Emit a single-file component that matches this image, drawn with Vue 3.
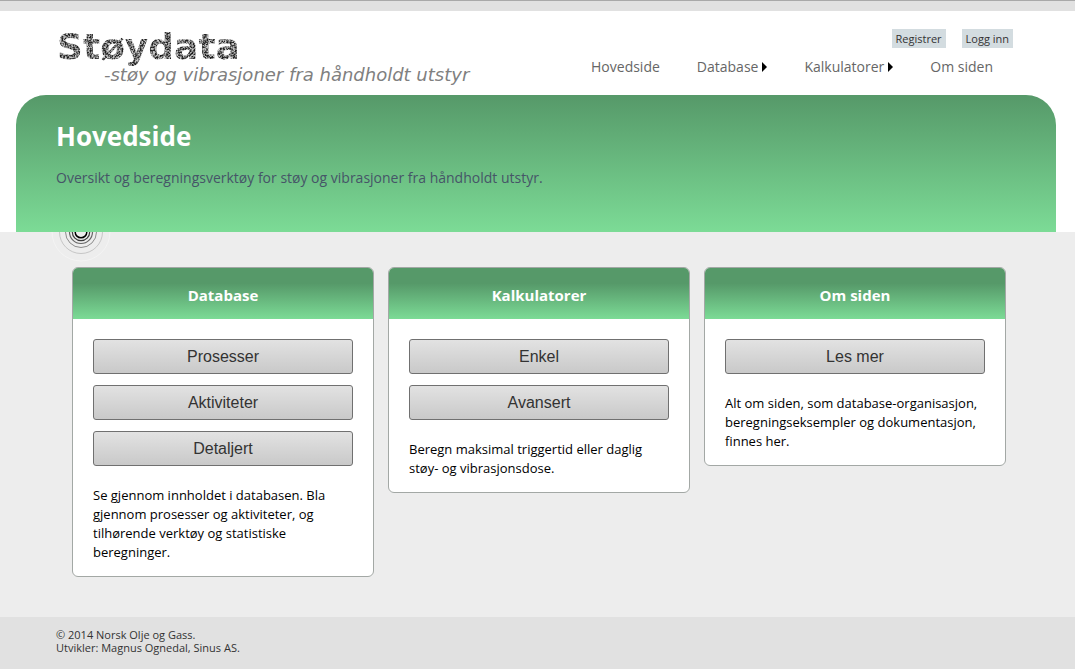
<script setup>
const nav = [
  { label: 'Hovedside', menu: false },
  { label: 'Database', menu: true },
  { label: 'Kalkulatorer', menu: true },
  { label: 'Om siden', menu: false },
]

const cards = [
  {
    title: 'Database',
    actions: ['Prosesser', 'Aktiviteter', 'Detaljert'],
    text: 'Se gjennom innholdet i databasen. Bla gjennom prosesser og aktiviteter, og tilhørende verktøy og statistiske beregninger.',
  },
  {
    title: 'Kalkulatorer',
    actions: ['Enkel', 'Avansert'],
    text: 'Beregn maksimal triggertid eller daglig støy- og vibrasjonsdose.',
  },
  {
    title: 'Om siden',
    actions: ['Les mer'],
    text: 'Alt om siden, som database-organisasjon, beregningseksempler og dokumentasjon, finnes her.',
  },
]

const rings = [
  { r: 29, color: '#f4f4f4', width: 1 },
  { r: 21.5, color: '#c6c6c6', width: 1 },
  { r: 15.5, color: '#8c8c8c', width: 1 },
  { r: 11.5, color: '#666666', width: 1.2 },
  { r: 8.7, color: '#3c3c3c', width: 1.2 },
  { r: 5.8, color: '#000000', width: 1.5 },
]
</script>

<template>
  <div class="page">
    <header class="top">
      <a class="logo" href="#" aria-label="Støydata">
        <svg width="430" height="64" viewBox="0 0 430 64">
          <defs>
            <filter id="grain" x="0" y="0" width="100%" height="100%" color-interpolation-filters="sRGB">
              <feTurbulence type="fractalNoise" baseFrequency="0.6" numOctaves="2" seed="4" result="noise" />
              <feColorMatrix
                in="noise"
                type="matrix"
                values="3 0 0 0 -1  3 0 0 0 -1  3 0 0 0 -1  0 0 0 0 1"
                result="gray"
              />
              <feComponentTransfer in="gray" result="toned">
                <feFuncR type="linear" slope="0.66" intercept="0.12" />
                <feFuncG type="linear" slope="0.66" intercept="0.12" />
                <feFuncB type="linear" slope="0.66" intercept="0.12" />
              </feComponentTransfer>
              <feComposite in="toned" in2="SourceGraphic" operator="in" />
            </filter>
          </defs>
          <text class="logo-name" x="0" y="32" filter="url(#grain)">Støydata</text>
          <text class="logo-tag" x="47" y="54">-støy og vibrasjoner fra håndholdt utstyr</text>
        </svg>
      </a>
      <div class="menus">
        <div class="account">
          <a href="#">Registrer</a>
          <a href="#">Logg inn</a>
        </div>
        <nav class="nav">
          <a v-for="item in nav" :key="item.label" href="#">
            {{ item.label }}
            <svg v-if="item.menu" class="arrow" width="5" height="10" viewBox="0 0 5 10">
              <path d="M0 0 L5 5 L0 10 Z" />
            </svg>
          </a>
        </nav>
      </div>
    </header>

    <div class="hero-band">
      <section class="hero">
        <h1>Hovedside</h1>
        <p>Oversikt og beregningsverktøy for støy og vibrasjoner fra håndholdt utstyr.</p>
      </section>
    </div>

    <main class="main">
      <svg class="rings" width="60" height="30" viewBox="0 0 60 30">
        <circle
          v-for="ring in rings"
          :key="ring.r"
          cx="30"
          cy="0"
          :r="ring.r"
          fill="none"
          :stroke="ring.color"
          :stroke-width="ring.width"
        />
      </svg>
      <div class="cards">
        <article v-for="card in cards" :key="card.title" class="card">
          <h2>{{ card.title }}</h2>
          <div class="card-body">
            <button v-for="action in card.actions" :key="action" type="button">{{ action }}</button>
            <p>{{ card.text }}</p>
          </div>
        </article>
      </div>
    </main>

    <footer class="footer">
      <p>© 2014 Norsk Olje og Gass.<br />Utvikler: Magnus Ognedal, Sinus AS.</p>
    </footer>
  </div>
</template>

<style>
body {
  margin: 0;
  background: #e1e1e1;
}
</style>

<style scoped>
.page {
  display: flex;
  flex-direction: column;
  min-height: 100vh;
  box-sizing: border-box;
  border-top: 1px solid #a9a9a9;
  padding-top: 10px;
  background: #e1e1e1;
  font-family: "Open Sans", "Noto Sans", sans-serif;
}

.top {
  display: flex;
  justify-content: space-between;
  align-items: flex-start;
  height: 84px;
  padding: 0 62px 0 57px;
  background: #fff;
}

.logo {
  padding-top: 16px;
}

.logo svg {
  display: block;
}

.logo-name {
  font: bold 36px "DejaVu Sans", sans-serif;
}

.logo-tag {
  font: italic 18px "DejaVu Sans", sans-serif;
  fill: #808080;
}

.menus {
  display: flex;
  flex-direction: column;
  align-items: flex-end;
  padding-top: 18px;
}

.account {
  display: flex;
  gap: 16px;
}

.account a {
  padding: 0 4px;
  background: #d3dce0;
  color: #333;
  font-size: 11px;
  line-height: 19px;
  text-decoration: none;
}

.nav {
  display: flex;
  gap: 37px;
  padding: 9px 20px 0 0;
}

.nav a {
  display: flex;
  align-items: center;
  gap: 4px;
  color: #666;
  font-size: 14px;
  line-height: 20px;
  text-decoration: none;
}

.arrow {
  fill: #000;
}

.hero-band {
  padding: 0 19px 0 16px;
  background: #fff;
}

.hero {
  height: 137px;
  box-sizing: border-box;
  padding: 23px 40px 0;
  border-radius: 30px 30px 0 0;
  background: linear-gradient(#569969, #7cdb96);
}

.hero h1 {
  margin: 0;
  color: #fff;
  font-size: 26px;
  font-weight: 700;
  line-height: 36px;
}

.hero p {
  margin: 14px 0 0;
  color: #465568;
  font-size: 14px;
  line-height: 20px;
}

.main {
  padding: 0 69px 40px 72px;
  background: #ededed;
}

.rings {
  display: block;
  margin-left: -21px;
}

.cards {
  display: grid;
  grid-template-columns: repeat(3, 1fr);
  align-items: start;
  gap: 14px;
  margin-top: 5px;
}

.card {
  overflow: hidden;
  border: 1px solid #a3a8a5;
  border-radius: 6px;
  background: #fff;
}

.card h2 {
  margin: 0;
  padding: 15px 0 12px;
  background: linear-gradient(#569969 30%, #7cdb96);
  color: #fff;
  font-size: 15px;
  font-weight: 700;
  line-height: 24px;
  text-align: center;
}

.card-body {
  padding: 20px 20px 14px;
}

.card-body button {
  display: block;
  width: 100%;
  height: 35px;
  margin: 0 0 11px;
  border: 1px solid #707070;
  border-radius: 3px;
  background: linear-gradient(#e2e2e2, #c9c9c9);
  color: #333;
  font: 16px "Liberation Sans", Arial, sans-serif;
}

.card-body p {
  margin: 20px 0 0;
  color: #000;
  font-size: 13px;
  line-height: 19px;
}

.footer {
  flex: 1;
  padding: 11px 56px 14px;
  background: #e1e1e1;
}

.footer p {
  margin: 0;
  color: #333;
  font-size: 11px;
  line-height: 13px;
}
</style>
